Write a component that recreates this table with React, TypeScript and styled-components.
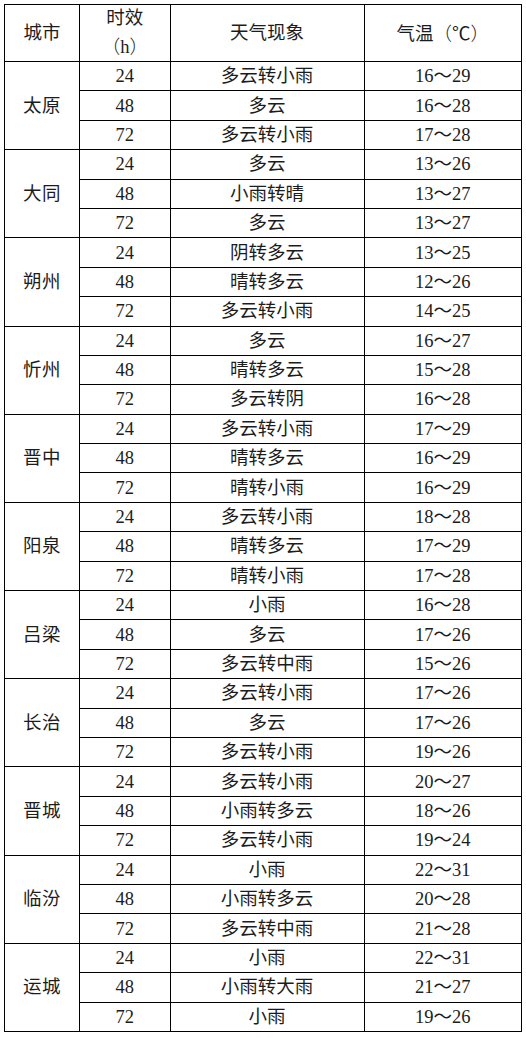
import React from 'react';
import styled, { createGlobalStyle } from 'styled-components';

const GlobalStyle = createGlobalStyle`
    html, body {
        margin: 0;
        padding: 0;
        background: #ffffff;
    }
`;

const Page = styled.div`
    padding: 4px 0 0 4px;
    width: 526px;
    box-sizing: border-box;
`;

const Table = styled.table`
    border-collapse: collapse;
    table-layout: fixed;
    width: 517px;
    font-family: "Liberation Serif", "Noto Sans CJK SC", serif;
    font-size: 18.5px;
    color: #1c1c1c;
    border: 1.3px solid #000;
`;

const HeadCell = styled.th`
    font-weight: normal;
    height: 56px;
    padding: 0;
    text-align: center;
    vertical-align: middle;
    line-height: 27px;
    border: 1.3px solid #000;
`;

// full-width bracket, kept at its full em width
const Paren = styled.span<{ $side: 'open' | 'close' }>`
    display: inline-block;
    width: 1em;
    text-align: ${(p) => (p.$side === 'open' ? 'right' : 'left')};
    font-family: "Noto Sans CJK SC", sans-serif;
    font-weight: 300;
`;

const Symbol = styled.span`
    font-family: "Noto Sans CJK SC", sans-serif;
`;

const Cell = styled.td<{ $city?: boolean }>`
    height: 28.4px;
    padding: 0;
    text-align: center;
    vertical-align: middle;
    line-height: 20px;
    border: 1.3px solid #000;
    letter-spacing: ${(p) => (p.$city ? '0.5px' : '0')};
`;

type Forecast = [string, string];

type City = {
    name: string
    rows: Forecast[]
}

const HOURS = ['24', '48', '72'];

const cities: City[] = [
    { name: '太原', rows: [['多云转小雨', '16～29'], ['多云', '16～28'], ['多云转小雨', '17～28']] },
    { name: '大同', rows: [['多云', '13～26'], ['小雨转晴', '13～27'], ['多云', '13～27']] },
    { name: '朔州', rows: [['阴转多云', '13～25'], ['晴转多云', '12～26'], ['多云转小雨', '14～25']] },
    { name: '忻州', rows: [['多云', '16～27'], ['晴转多云', '15～28'], ['多云转阴', '16～28']] },
    { name: '晋中', rows: [['多云转小雨', '17～29'], ['晴转多云', '16～29'], ['晴转小雨', '16～29']] },
    { name: '阳泉', rows: [['多云转小雨', '18～28'], ['晴转多云', '17～29'], ['晴转小雨', '17～28']] },
    { name: '吕梁', rows: [['小雨', '16～28'], ['多云', '17～26'], ['多云转中雨', '15～26']] },
    { name: '长治', rows: [['多云转小雨', '17～26'], ['多云', '17～26'], ['多云转小雨', '19～26']] },
    { name: '晋城', rows: [['多云转小雨', '20～27'], ['小雨转多云', '18～26'], ['多云转小雨', '19～24']] },
    { name: '临汾', rows: [['小雨', '22～31'], ['小雨转多云', '20～28'], ['多云转中雨', '21～28']] },
    { name: '运城', rows: [['小雨', '22～31'], ['小雨转大雨', '21～27'], ['小雨', '19～26']] },
];

const App = () => {
    return (
        <Page>
            <GlobalStyle />
            <Table>
                <colgroup>
                    <col style={{ width: 75 }} />
                    <col style={{ width: 90.5 }} />
                    <col style={{ width: 194 }} />
                    <col style={{ width: 157.5 }} />
                </colgroup>
                <thead>
                    <tr>
                        <HeadCell>城市</HeadCell>
                        <HeadCell>
                            时效<br />
                            <Paren $side="open">（</Paren>h<Paren $side="close">）</Paren>
                        </HeadCell>
                        <HeadCell>天气现象</HeadCell>
                        <HeadCell>
                            气温<Paren $side="open">（</Paren><Symbol>℃</Symbol><Paren $side="close">）</Paren>
                        </HeadCell>
                    </tr>
                </thead>
                <tbody>
                    {cities.map((city) =>
                        city.rows.map(([weather, temp], i) => (
                            <tr key={city.name + i}>
                                {i === 0 && (
                                    <Cell $city rowSpan={3}>{city.name}</Cell>
                                )}
                                <Cell>{HOURS[i]}</Cell>
                                <Cell>{weather}</Cell>
                                <Cell>{temp}</Cell>
                            </tr>
                        ))
                    )}
                </tbody>
            </Table>
        </Page>
    );
};

export default App;
